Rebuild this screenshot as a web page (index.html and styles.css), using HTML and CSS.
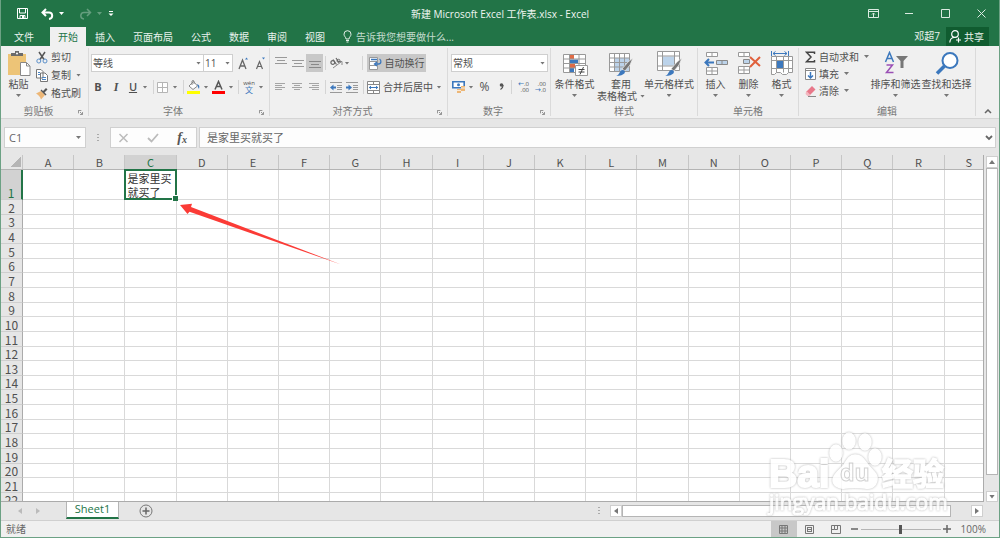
FILE: index.html
```html
<!DOCTYPE html>
<html lang="zh-CN">
<head>
<meta charset="utf-8">
<title>新建 Microsoft Excel 工作表.xlsx - Excel</title>
<link rel="stylesheet" href="styles.css">
</head>
<body>
<div class="window">
<header class="titlebar">
  <div class="quick">
    <button aria-label="保存"><svg width="11" height="11" viewBox="0 0 11 11"><path d="M.5.5h10v10H.5z" fill="none" stroke="#fff"/><path d="M2.500 1v4h6V1M3 10.500V7.500h5v3" fill="none" stroke="#fff"/><path d="M5 8h2v3H5z" fill="#fff"/></svg></button>
    <button aria-label="撤消"><svg width="13" height="12" viewBox="0 0 13 12"><path d="M2 4.500h6c4 0 4.500 6 0 6.500M5 1 1.500 4.500 5 8" fill="none" stroke="#fff" stroke-width="2"/></svg></button>
    <i class="caret light"></i>
    <button class="faded" aria-label="恢复"><svg width="13" height="12" viewBox="0 0 13 12"><path d="M11 4.500H5c-4 0-4.500 6 0 6.500M8 1l3.500 3.500L8 8" fill="none" stroke="#fff" stroke-width="1.500"/></svg></button>
    <i class="caret light faded"></i>
    <button aria-label="自定义快速访问工具栏"><svg width="6" height="6" viewBox="0 0 6 6"><path d="M1 .5h4" stroke="#fff"/><path d="M.5 2.500h5L3 5z" fill="#fff"/></svg></button>
  </div>
  <h1>新建 Microsoft Excel 工作表.xlsx - Excel</h1>
  <div class="winbtns">
    <button aria-label="功能区显示选项"><svg width="11" height="9" viewBox="0 0 11 9"><path d="M.5.5h10v8H.5zM1 2.500h9M5.500 8V4M4 5.500 5.500 4 7 5.500" fill="none" stroke="#dcebe2"/></svg></button>
    <button aria-label="最小化"><svg width="9" height="9" viewBox="0 0 9 9"><path d="M0 4.500h8" stroke="#dcebe2"/></svg></button>
    <button aria-label="最大化"><svg width="9" height="9" viewBox="0 0 9 9"><path d="M.5.5h8v8h-8z" fill="none" stroke="#dcebe2"/></svg></button>
    <button aria-label="关闭"><svg width="9" height="9" viewBox="0 0 9 9"><path d="m.5.5 8 8m0-8-8 8" stroke="#dcebe2"/></svg></button>
  </div>
</header>
<nav class="tabs">
  <button class="file">文件</button><button class="active">开始</button><button>插入</button><button>页面布局</button><button>公式</button><button>数据</button><button>审阅</button><button>视图</button>
  <button class="tell"><svg width="9" height="13" viewBox="0 0 9 13"><path d="M3 9C3 7 1 6.500 1 4.200a3.500 3.500 0 0 1 7 0C8 6.500 6 7 6 9zM3 10.500h3M3.500 12h2" fill="none" stroke="#e5f0e9"/></svg>告诉我您想要做什么...</button>
  <span class="user">邓超7</span>
  <button class="share"><svg width="13" height="13" viewBox="0 0 13 13"><circle cx="6" cy="4" r="3.300" fill="none" stroke="#fff" stroke-width="1.200"/><path d="M.8 12.500C1 9 3 7.500 5.500 7.500M7 10h5M9.500 7.500v5" fill="none" stroke="#fff" stroke-width="1.200"/></svg>共享</button>
</nav>
<div class="ribbon">
  <section class="group g-clip">
    <div class="body">
      <button class="big"><svg width="24" height="26" viewBox="0 0 24 26"><path d="M1 3h18v21H1z" fill="#edc477"/><path d="M4 5V2h4V0h4v2h4v3z" fill="#6b6b6b"/><circle cx="10" cy="2.500" r="1" fill="#fff"/><path d="M13.500 11.500h6l3.500 3.500v9.500h-9.500z" fill="#fff" stroke="#888"/><path d="M19.500 11.500V15H23" fill="none" stroke="#888"/></svg><span>粘贴</span><i class="caret"></i></button>
      <div class="stack">
        <button><svg width="12" height="13" viewBox="0 0 12 13"><path d="m3 1 5 7.500M9 1 4 8.500" stroke="#555" stroke-width="1.500"/><circle cx="2.800" cy="10" r="2" fill="none" stroke="#5b8fc9"/><circle cx="9" cy="10" r="2" fill="none" stroke="#5b8fc9"/></svg>剪切</button>
        <button><svg width="12" height="13" viewBox="0 0 12 13"><path d="M.5.500h4.500l2 2V9H.5zM4.500 4h4.500L11.500 6.500v6h-7z" fill="#fff" stroke="#777"/><path d="M2 3.500h2M2 5.500h2M6 8.500h4M6 10.500h4" stroke="#4a84c4"/></svg>复制<i class="caret"></i></button>
        <button><svg width="12" height="13" viewBox="0 0 12 13"><path d="M0 6.500 5 4l4 4-4 4.500C4 9 2 8 0 6.500z" fill="#edb777"/><path d="m4.500 3.500 5 5 1-1-2-2 3-3-1.500-1.500-3 3-1.500-1.500z" fill="#555"/></svg>格式刷</button>
      </div>
    </div>
    <footer><span>剪贴板</span><svg class="launch" viewBox="0 0 6 6"><path d="M.5 4V.5H4M2.500 2.500l2 2M5.500 2.500v3h-3" fill="none" stroke="#777"/></svg></footer>
  </section>
  <section class="group g-font">
    <div class="body rows">
      <div class="tools font1">
        <label class="combo"><select aria-label="字体"><option>等线</option></select><i class="caret"></i></label>
        <label class="combo size"><select aria-label="字号"><option>11</option></select><i class="caret"></i></label>
        <button aria-label="增大字号"><svg width="11" height="13" viewBox="0 0 11 13"><path d="m1 12 3.500-9L8 12M2.200 9h4.600" fill="none" stroke="#666" stroke-width="1.300"/><path d="m7 2.500 1.500-2 1.500 2z" fill="#3c78bd"/></svg></button>
        <button aria-label="减小字号"><svg width="11" height="13" viewBox="0 0 11 13"><path d="m1.500 12 3-7.500 3 7.500M2.500 9.500h4" fill="none" stroke="#666" stroke-width="1.200"/><path d="M7 .5h3l-1.500 2z" fill="#3c78bd"/></svg></button>
      </div>
      <div class="tools font2">
        <button class="bold">B</button><button class="italic">I</button><button class="under">U</button><i class="caret"></i><i class="sep"></i>
        <button aria-label="边框"><svg width="11" height="11" viewBox="0 0 11 11"><path d="M.5.5h10v10H.5zM5.500 0v11M0 5.500h11" fill="#fff" stroke="#b5b5b5"/></svg></button><i class="caret"></i><i class="sep"></i>
        <button aria-label="填充颜色"><svg width="13" height="14" viewBox="0 0 13 14"><path d="M2 6 6.500 1.500 10.500 6 6 9.500z" fill="#fff" stroke="#888"/><path d="M5 5V1q1-1 2 0v3" fill="none" stroke="#888"/><path d="M10 4c3 1 2.500 3 2 5-1-1-1-3-2-5z" fill="#3c78bd"/><path d="M0 11h13v3H0z" fill="#ffff00"/></svg></button><i class="caret"></i>
        <button aria-label="字体颜色"><svg width="13" height="14" viewBox="0 0 13 14"><path d="m3 9.500 3.500-8 3.500 8M4 6.500h5" fill="none" stroke="#555" stroke-width="1.500"/><path d="M0 11h13v3H0z" fill="#f00"/></svg></button><i class="caret"></i><i class="sep"></i>
        <button class="phon"><span>wén</span><b>文</b></button><i class="caret"></i>
      </div>
    </div>
    <footer><span>字体</span><svg class="launch" viewBox="0 0 6 6"><path d="M.5 4V.5H4M2.500 2.500l2 2M5.500 2.500v3h-3" fill="none" stroke="#777"/></svg></footer>
  </section>
  <section class="group g-align">
    <div class="body rows">
      <div class="tools align1">
        <button aria-label="顶端对齐"><svg width="12" height="12" viewBox="0 0 12 12"><path d="M0 .5h12M2 3.500h8M0 6.500h12" stroke="#999"/></svg></button>
        <button aria-label="垂直居中"><svg width="12" height="12" viewBox="0 0 12 12"><path d="M0 3.500h12M2 6.500h8M0 9.500h12" stroke="#999"/></svg></button>
        <button class="on" aria-label="底端对齐"><svg width="12" height="12" viewBox="0 0 12 12"><path d="M0 4.500h12M2 7.500h8M0 10.500h12" stroke="#888"/></svg></button>
        <i class="sep"></i>
        <button aria-label="方向"><svg width="13" height="12" viewBox="0 0 13 12"><path d="M3 11 11 5M8.500 4.500H12V8" fill="none" stroke="#888"/><circle cx="2.800" cy="5.500" r="1.900" fill="none" stroke="#666" stroke-width="1.200"/><path d="m3 2.500 3.500 5M6 1l3 4.500" stroke="#666" stroke-width="1.200"/><circle cx="8.500" cy="3.800" r="1.500" fill="none" stroke="#666"/></svg></button><i class="caret"></i><i class="sep last"></i>
        <button class="on wide"><svg width="13" height="13" viewBox="0 0 13 13"><path d="M.5.500h8v12h-8zM.5 4.500h8M.5 8.500h8" fill="#fff" stroke="#999"/><path d="M2 2.500h6M10.500 2c2 1 2 5-1 5H6M8 5 5.500 7 8 9" fill="none" stroke="#3c78bd" stroke-width="1.300"/></svg>自动换行</button>
      </div>
      <div class="tools align2">
        <button aria-label="左对齐"><svg width="10" height="10" viewBox="0 0 10 10"><path d="M0 1.500h10M0 3.500h7M0 5.500h10M0 7.500h7" stroke="#a5a5a5"/></svg></button>
        <button aria-label="居中"><svg width="10" height="10" viewBox="0 0 10 10"><path d="M0 1.500h10M2 3.500h6M0 5.500h10M2 7.500h6" stroke="#a5a5a5"/></svg></button>
        <button aria-label="右对齐"><svg width="10" height="10" viewBox="0 0 10 10"><path d="M0 1.500h10M3 3.500h7M0 5.500h10M3 7.500h7" stroke="#a5a5a5"/></svg></button>
        <i class="sep"></i>
        <button aria-label="减少缩进量"><svg width="12" height="11" viewBox="0 0 12 11"><path d="M0 .5h12M7 3.500h5M7 5.500h5M7 7.500h5M0 10.500h12" stroke="#999"/><path d="M6 5.500H2" stroke="#3c78bd" stroke-width="2"/><path d="M3.500 2.500v6L0 5.500z" fill="#3c78bd"/></svg></button>
        <button aria-label="增加缩进量"><svg width="12" height="11" viewBox="0 0 12 11"><path d="M0 .5h12M7 3.500h5M7 5.500h5M7 7.500h5M0 10.500h12" stroke="#999"/><path d="M0 5.500h4" stroke="#3c78bd" stroke-width="2"/><path d="M2.500 2.500v6l3.500-3z" fill="#3c78bd"/></svg></button>
        <i class="sep"></i>
        <button class="wide"><svg width="13" height="13" viewBox="0 0 13 13"><path d="M.5.500h12v12H.5zM.5 3.500h12M.5 9.500h12M6.500.5v3M6.500 9.500v3" fill="#fff" stroke="#888"/><path d="M2 6.500h9M4 5 2.300 6.500 4 8M9 5l1.700 1.500L9 8" fill="none" stroke="#3c78bd"/></svg>合并后居中</button><i class="caret"></i>
      </div>
    </div>
    <footer><span>对齐方式</span><svg class="launch" viewBox="0 0 6 6"><path d="M.5 4V.5H4M2.500 2.500l2 2M5.500 2.500v3h-3" fill="none" stroke="#777"/></svg></footer>
  </section>
  <section class="group g-num">
    <div class="body rows">
      <div class="tools num1"><label class="combo"><select aria-label="数字格式"><option>常规</option></select><i class="caret"></i></label></div>
      <div class="tools num2">
        <button aria-label="会计数字格式"><svg width="13" height="13" viewBox="0 0 13 13"><path d="M.8.800h11.400v6H.8z" fill="#fff" stroke="#3c78bd" stroke-width="1.600"/><circle cx="6.500" cy="3.800" r="1.500" fill="#3c78bd"/><path d="M5 8h4v4H5zM9 5h4v5H9z" fill="#edb777"/><path d="M5 9.500h4M9 7h4" stroke="#fff" stroke-width=".7"/></svg></button><i class="caret"></i>
        <button class="pct">%</button><button aria-label="千位分隔样式"><svg width="5" height="8" viewBox="0 0 5 8"><circle cx="2.500" cy="2" r="1.800" fill="#555"/><path d="M4 2c.3 2-1 3.500-2.500 4.500" fill="none" stroke="#555" stroke-width="1.200"/></svg></button><i class="sep"></i>
        <button class="dec"><span><b>←</b>.0</span><span>.00</span></button>
        <button class="dec"><span>.00</span><span><b>→</b>.0</span></button>
      </div>
    </div>
    <footer><span>数字</span><svg class="launch" viewBox="0 0 6 6"><path d="M.5 4V.5H4M2.500 2.500l2 2M5.500 2.500v3h-3" fill="none" stroke="#777"/></svg></footer>
  </section>
  <section class="group g-style">
    <div class="body">
      <button class="big"><svg width="26" height="26" viewBox="0 0 26 26"><path d="M1.500 3.500h22v18h-22z" fill="#fff"/><path d="M8 3h4v5H8zM8 13h5v4H8z" fill="#e06b45"/><path d="M8 8.500h8v4H8zM8 17h4v4H8z" fill="#3c78bd"/><path d="M1.500 3.500h22v18h-22zM1.500 8h22M1.500 12.500h22M1.500 17h22M7.500 3.500v18M17 3.500v18" fill="none" stroke="#999"/><path d="M13.500 14.500h12v10h-12z" fill="#fff" stroke="#999"/><path d="M16.500 18.500h6M16.500 21h6M21.500 16l-3.500 7.500" stroke="#444"/></svg><span>条件格式</span><i class="caret"></i></button>
      <button class="big"><svg width="26" height="26" viewBox="0 0 26 26"><path d="M1.500 2.500h20v18h-20z" fill="#fff"/><path d="M6.500 7h15v13.500h-15z" fill="#bcd3ea"/><path d="M1.500 2.500h20v18h-20zM1.500 7h20M1.500 11.500h20M1.500 16h20M6.500 2.500v18M11.500 2.500v18M16.500 2.500v18" fill="none" stroke="#999"/><path d="m14 18 6-7 5-4-3 7-5 6z" fill="#777" stroke="#f0f0f0" stroke-width=".7"/><path d="M8 25c4-1 3-6 7-6 4 1 2 6-7 6z" fill="#3c78bd"/></svg><span>套用</span><span class="with">表格格式<i class="caret"></i></span></button>
      <button class="big"><svg width="26" height="26" viewBox="0 0 26 26"><path d="M1.500.5h22v19h-22z" fill="#fff"/><path d="M6.500 5.500h12v9h-12z" fill="#bcd3ea"/><path d="M1.500.5h22v19h-22zM1.500 5h22M1.500 15h22M6.500.5v19M18.500.5v19" fill="none" stroke="#999"/><path d="m15 18 6-7 5-4-3 7-5 6z" fill="#777" stroke="#f0f0f0" stroke-width=".7"/><path d="M9 25c4-1 3-6 7-6 4 1 2 6-7 6z" fill="#3c78bd"/></svg><span>单元格样式</span><i class="caret"></i></button>
    </div>
    <footer class="plain"><span>样式</span></footer>
  </section>
  <section class="group g-cell">
    <div class="body">
      <button class="big"><svg width="24" height="26" viewBox="0 0 24 26"><path d="M2.500 1.500h11v4h-11zM8 1.500v4M2.500 16.500h11v7h-11zM8 16.500v7M2.500 20h11" fill="#fff" stroke="#999"/><path d="M12.500 9.500h11v4h-11zM18 9.500v4" fill="#bcd3ea" stroke="#888"/><path d="M10 11.500H2M5 8l-3.500 3.500L5 15" fill="none" stroke="#3c78bd" stroke-width="2"/></svg><span>插入</span><i class="caret"></i></button>
      <button class="big"><svg width="24" height="26" viewBox="0 0 24 26"><path d="M1.500 1.500h11v4h-11zM7 1.500v4M1.500 15.500h11v7h-11zM7 15.500v7M1.500 19h11" fill="#fff" stroke="#999"/><path d="M6.500 8.500h6v4h-6z" fill="#bcd3ea" stroke="#888"/><path d="m13 6 10 9M23 6l-10 10" stroke="#e0603c" stroke-width="2"/></svg><span>删除</span><i class="caret"></i></button>
      <button class="big"><svg width="24" height="26" viewBox="0 0 24 26"><path d="M1.500 5.500h21v16h-4l-2 2h-4l-2-2h-4l-2 2h-3z" fill="#fff"/><path d="M7 10h6v7H7z" fill="#3c78bd"/><path d="M1.500 5.500h21v16h-4l-2 2h-4l-2-2h-4l-2 2h-3zM1.500 9.500h21M1.500 17.500h21M6.500 5.500v16M13.500 5.500v16M18.500 5.500v16" fill="none" stroke="#999"/><path d="M1.500 0v5M18.500 0v5M3 2.500h14M5.500.5l-2.500 2 2.500 2M14.500.5l2.500 2-2.500 2" fill="none" stroke="#3c78bd"/></svg><span>格式</span><i class="caret"></i></button>
    </div>
    <footer class="plain"><span>单元格</span></footer>
  </section>
  <section class="group g-edit">
    <div class="body">
      <div class="stack">
        <button><svg width="11" height="12" viewBox="0 0 11 12"><path d="M9.500 3V1.200H1.500L6 6l-4.500 4.800h8V9" fill="none" stroke="#444" stroke-width="1.500"/></svg>自动求和<i class="caret far"></i></button>
        <button><svg width="11" height="12" viewBox="0 0 11 12"><path d="M.5.500h10v11H.5zM.5 2.500h10" fill="#fff" stroke="#888"/><path d="M5.500 4v6M3 7.500 5.500 10 8 7.500" fill="none" stroke="#3c78bd" stroke-width="1.500"/></svg>填充<i class="caret"></i></button>
        <button><svg width="11" height="12" viewBox="0 0 11 12"><path d="m1 7 6-6 3.500 3.500-6 6z" fill="#e8788a"/><path d="m1 7-.5 2L2.500 11h2l1-1L2 6.500z" fill="#f3b6bf"/><path d="M3 11.500h8" stroke="#888"/></svg>清除<i class="caret"></i></button>
      </div>
      <button class="big"><svg width="24" height="26" viewBox="0 0 24 26"><path d="m1.500 11 4-9.500 4 9.500M3 7.500h5" fill="none" stroke="#3c78bd" stroke-width="1.500"/><path d="M2.500 14h6l-6 7.500h7" fill="none" stroke="#9a4fb5" stroke-width="1.500"/><path d="M12 5h12l-4.500 5v7h-3v-7z" fill="#777"/></svg><span>排序和筛选</span><i class="caret"></i></button>
      <button class="big"><svg width="24" height="26" viewBox="0 0 24 26"><circle cx="15" cy="9.500" r="7.500" fill="#fff" stroke="#3c78bd" stroke-width="2"/><path d="m9.500 15-7.500 7.500" stroke="#3c78bd" stroke-width="3.500"/></svg><span>查找和选择</span><i class="caret"></i></button>
    </div>
    <footer class="plain"><span>编辑</span></footer>
  </section>
  <button class="collapse" aria-label="折叠功能区"><svg width="8" height="5" viewBox="0 0 8 5"><path d="m1 4 3-3 3 3" fill="none" stroke="#666" stroke-width="1.500"/></svg></button>
</div>
<div class="formula">
  <label class="namebox"><input value="C1" aria-label="名称框"><i class="caret"></i></label>
  <span class="dots"></span>
  <div class="fxbox">
    <button aria-label="取消"><svg width="11" height="10" viewBox="0 0 11 10"><path d="m1.500 1 8 8m0-8-8 8" stroke="#bbb" stroke-width="1.500"/></svg></button>
    <button aria-label="输入"><svg width="12" height="10" viewBox="0 0 12 10"><path d="m1 5 3.500 3.500L11 1" fill="none" stroke="#bbb" stroke-width="1.800"/></svg></button>
    <button class="fx">f<small>x</small></button>
  </div>
  <label class="fbox"><input value="是家里买就买了" aria-label="编辑栏"><svg width="8" height="6" viewBox="0 0 8 6"><path d="m1 1 3 3 3-3" fill="none" stroke="#666" stroke-width="1.800"/></svg></label>
</div>
<main class="work">
  <table class="sheet" id="sheet"></table>
  <div class="vscroll"><button aria-label="向上滚动"><i class="tri up"></i></button><div class="thumb"></div><button aria-label="向下滚动"><i class="tri down"></i></button></div>
  <svg class="arrow" width="164" height="64" viewBox="0 0 164 64"><path d="m1 3 12-1.300-1 3.300L162 62.500 10.500 9.800 8.500 12z" fill="#fb3b36"/></svg>
</main>
<div class="sheetbar">
  <div class="nav"><i class="tri left"></i><i class="tri right"></i></div>
  <button class="sheettab">Sheet1</button>
  <button class="add" aria-label="新工作表"><svg width="14" height="14" viewBox="0 0 14 14"><circle cx="7" cy="7" r="6" fill="none" stroke="#777"/><path d="M7 3.500v7M3.500 7h7" stroke="#666" stroke-width="1.500"/></svg></button>
  <span class="dots"></span>
  <div class="hscroll"><button aria-label="向左滚动"><i class="tri left"></i></button><div class="thumb"></div><button aria-label="向右滚动"><i class="tri right"></i></button></div>
</div>
<footer class="status">
  <span class="ready">就绪</span>
  <button class="on" aria-label="普通"><svg width="9" height="9" viewBox="0 0 9 9"><path d="M.5.5h8v8h-8zM.5 3h8M.5 6h8M3 .5v8M6 .5v8" fill="none" stroke="#777"/></svg></button>
  <button aria-label="页面布局"><svg width="9" height="9" viewBox="0 0 9 9"><path d="M.5.5h8v8h-8zM2.500 2v5M6.500 2v5M3 2.500h3M3 4.500h3M3 6.500h3" fill="none" stroke="#777"/></svg></button>
  <button aria-label="分页预览"><svg width="10" height="9" viewBox="0 0 10 9"><path d="M.5.5h9v8h-9zM3.500.5v4h-3M6.500.5v4h-3" fill="none" stroke="#777"/></svg></button>
  <div class="zoom"><button aria-label="缩小"><svg width="7" height="8" viewBox="0 0 7 8"><path d="M0 4h7" stroke="#666" stroke-width="1.500"/></svg></button><input type="range" min="0" max="200" value="100" aria-label="缩放"><button aria-label="放大"><svg width="8" height="8" viewBox="0 0 8 8"><path d="M0 4h8M4 0v8" stroke="#666" stroke-width="1.500"/></svg></button></div>
  <span class="pctval">100%</span>
</footer>
<svg class="mark" width="184" height="92" viewBox="0 0 184 92" aria-hidden="true">
  <g fill="#fff" stroke="#fff" stroke-width="1.500">
    <text class="brand" x="3" y="57">Bai</text>
    <ellipse cx="70" cy="23" rx="6" ry="8"/><ellipse cx="83" cy="11" rx="6" ry="8"/><ellipse cx="99" cy="12" rx="6" ry="8"/><ellipse cx="109" cy="27" rx="6" ry="8"/>
    <path d="M89 25c7 0 9 5 13 10 5 6 10 9 9 15-1 7-7 9-12 8-7-1-14-1-20 0-7 1-12-3-12-8 0-6 6-9 11-15 3-5 5-10 11-10z"/>
    <text class="du" x="74" y="51">du</text>
    <text class="brandcn" x="116" y="55">经验</text>
    <text class="site" x="3" y="80">jingyan.baidu.com</text>
  </g>
</svg>
</div>
<script src="sheet.js"></script>
</body>
</html>
```
FILE: sheet.js
```javascript
const sheet = document.getElementById('sheet');
const letters = 'ABCDEFGHIJKLMNOPQRS'.split('');
const head = letters.map(l => `<th scope="col"${l === 'C' ? ' class="cur"' : ''}>${l}</th>`).join('');
let rows = '';
for (let r = 1; r <= 22; r++) {
  const cells = letters.map(l => r === 1 && l === 'C' ? '<td class="picked">是家里买就买了</td>' : '<td></td>').join('');
  rows += `<tr><th scope="row"${r === 1 ? ' class="cur"' : ''}>${r}</th>${cells}</tr>`;
}
sheet.innerHTML = `<thead><tr><td class="corner"></td>${head}</tr></thead><tbody>${rows}</tbody>`;
```
FILE: styles.css
```css
* { box-sizing: border-box; }
body { margin: 0; font: 10px/12px "Open Sans", "Noto Sans CJK SC", sans-serif; color: #505050; }
button { border: 0; padding: 0; background: none; font: inherit; color: inherit; display: flex; align-items: center; justify-content: center; white-space: nowrap; }
svg { display: block; flex: none; }
input, select { font: inherit; color: inherit; border: 0; padding: 0; margin: 0; background: none; appearance: none; min-width: 0; outline: 0; }
.window { position: relative; height: 100vh; display: flex; flex-direction: column; border: 1px solid #6ca184; border-top: 0; background: #e6e6e6; overflow: hidden; }
.caret { width: 5px; height: 3px; background: #777; clip-path: polygon(0 0, 100% 0, 50% 100%); flex: none; justify-self: center; align-self: center; }
.caret.light { background: #fff; }
.faded, .caret.faded { opacity: .3; }

.titlebar { flex: none; height: 27px; background: #227447; color: #f0f6f2; display: grid; grid-template-columns: 1fr auto 1fr; align-items: center; margin: 0 -1px; }
.titlebar h1 { margin: 0; font-size: 10px; font-weight: 400; }
.quick { display: grid; grid-template-columns: 11px 13px 5px 13px 5px 6px; column-gap: 10px; align-items: center; padding-left: 17px; }
.quick button:nth-child(2), .quick button:nth-child(4) { margin-left: 3px; margin-right: -3px; }
.quick .caret { justify-self: start; margin-left: -2px; }
.quick button:last-child { margin-left: -12px; }
.quick { grid-template-columns: 11px 13px 5px 13px 5px 6px; }
.winbtns { display: flex; justify-content: flex-end; padding-right: 1px; }
.winbtns button { width: 36px; height: 24px; }

.tabs { flex: none; display: flex; height: 19px; background: #227447; color: #e9f2ed; margin: 0 -1px; padding-right: 11px; }
.tabs button { padding: 0 9px; }
.tabs .file { width: 50px; padding: 0 2px 0 0; }
.tabs .active { background: #f0f0f0; color: #227447; padding: 0 8px; }
.tabs .tell { gap: 4px; color: #c5dccf; }
.tabs .user { margin: 3px 6px 0 auto; }
.tabs .share { background: #105c30; padding: 0 5px 0 3px; gap: 2px; }

.ribbon { flex: none; display: flex; height: 73px; background: #f0f0f0; border-bottom: 1px solid #d5d5d5; padding-top: 2px; }
.group { display: flex; flex-direction: column; border-right: 1px solid #dadada; margin-bottom: 2px; }
.group .body { flex: 1; display: flex; }
.group footer { flex: none; height: 14px; padding-top: 3px; display: grid; grid-template-columns: 4px 1fr 16px; align-items: center; color: #777; text-align: center; }
.group footer.plain { grid-template-columns: 4px 1fr 4px; }
.group footer span { grid-column: 2; }
.launch { width: 5px; height: 5px; margin: 3px auto 0; }
.g-clip { width: 88px; }
.g-font { width: 181px; }
.g-align { width: 178px; }
.g-num { width: 103px; }
.g-style { width: 147px; }
.g-cell { width: 101px; }
.g-edit { flex: 1; }
.big { flex: none; flex-direction: column; justify-content: flex-start; padding-top: 3px; }
.big svg { margin-bottom: 1px; }
.big .caret { margin-top: 4px; }
.big .caret { align-self: center; }
.big .with { display: flex; gap: 3px; }
.big .with .caret { margin-top: 0; }
.g-clip .big { width: 35px; }
.g-style .big { width: 46px; }
.g-style .big:first-child { width: 47px; }
.g-style .big:last-child { width: 50px; }
.g-cell .big { width: 33px; }
.g-cell .body { padding-left: 1px; }
.g-edit .big { width: 51px; }
.stack { flex: none; display: flex; flex-direction: column; }
.stack button { height: 18px; gap: 3px; justify-content: flex-start; }
.stack .caret { margin-left: 2px; }
.g-edit .stack { width: 71px; padding-left: 6px; }
.g-edit .stack button { height: 17px; }

.body.rows { flex-direction: column; gap: 4px; padding-top: 5px; }
.tools { display: grid; height: 20px; align-items: center; }
.font1 { grid-template-columns: 113px 29px 20px 14px; padding-left: 2px; }
.font2 { grid-template-columns: 18px 18px 16px 8px 8px 11px 14px 2px 19px 6px 19px 6px 8px 14px 10px; }
.align1 { grid-template-columns: 17px 17px 17px 4px 18px 4px 18px 59px; padding-left: 2px; }
.align2 { grid-template-columns: 16px 17px 17px 6px 16px 16px 7px 66px 12px; padding-left: 2px; }
.num1 { grid-template-columns: 97px; padding-left: 3px; }
.num2 { grid-template-columns: 18px 8px 19px 14px 7px 17px 17px; padding-left: 1px; }
.sep { width: 1px; height: 14px; background: #d4d4d4; justify-self: center; }
.sep.last { justify-self: end; margin-right: 4px; }
.on { background: #c8c8c8; height: 18px; }
.wide { gap: 3px; }
.combo { display: grid; height: 18px; background: #fff; border: 1px solid #cfcfcf; align-items: center; }
.combo > * { grid-area: 1 / 1; }
.combo select { padding-left: 1px; width: 100%; font-size: 10px; line-height: 14px; }
.combo .caret { justify-self: end; margin-right: 2px; }
.combo.size { border-left: 0; }
.bold { font-weight: 700; font-size: 11px; }
.italic { font: italic 700 12px "Liberation Serif", serif; }
.under { text-decoration: underline; font-weight: 600; font-size: 11px; }
.phon { flex-direction: column; font-size: 6px; line-height: 6px; }
.phon b { font-size: 8px; line-height: 8px; font-weight: 400; color: #3c78bd; }
.pct { font-size: 12px; }
.dec { flex-direction: column; align-items: flex-end; justify-self: center; font-size: 6px; line-height: 6px; }
.dec span { display: block; }
.dec b { color: #3c78bd; }
.collapse { width: 23px; align-self: flex-end; height: 14px; }

.formula { flex: none; display: flex; padding: 8px 3px 7px; height: 36px; font-size: 11px; color: #666; }
.namebox, .fxbox, .fbox { display: flex; align-items: center; background: #fdfdfd; border: 1px solid #d0d0d0; }
.namebox { width: 82px; padding: 0 4px; }
.namebox input { flex: 1; }
.dots { width: 2px; height: 8px; align-self: center; background: repeating-linear-gradient(#aaa 0 1px, transparent 1px 3px); }
.formula .dots { margin: 0 11px 0 11px; }
.fxbox { width: 87px; justify-content: space-between; padding: 0 9px 0 7px; }
.fx { font: italic 700 14px "Liberation Serif", serif; color: #555; }
.fx small { font-size: 10px; padding-top: 4px; }
.fbox { flex: 1; margin-left: 2px; padding: 0 2px 0 7px; }
.fbox input { flex: 1; }

.work { position: relative; flex: 1; min-height: 0; display: flex; }
.sheet { flex: 1; display: flex; flex-direction: column; border-right: 1px solid #ababab; border-bottom: 1px solid #ababab; font: 11px/14px "Noto Sans CJK SC", sans-serif; color: #505050; min-height: 0; }
.sheet thead { display: block; flex: none; height: 15px; }
.sheet tbody { flex: 1; min-height: 0; display: grid; grid-template-rows: 30px repeat(20, minmax(0, 11fr)) minmax(0, 6fr); background: #fff; }
.sheet tr { display: grid; grid-template-columns: 22px repeat(18, minmax(0, 4fr)) minmax(0, 3fr); grid-template-rows: minmax(0, 1fr); min-height: 0; }
.sheet thead tr { height: 100%; border-bottom: 1px solid #b4b4b4; }
.sheet th, .sheet td { padding: 0; min-height: 0; font-weight: 400; }
.sheet thead th { border-right: 1px solid #c6c6c6; line-height: 15px; }
.sheet thead th:last-child { border-right: 0; padding-left: 10px; }
.sheet .corner { background: linear-gradient(135deg, transparent 50%, #b5b5b5 50%) no-repeat 10px 2px / 10px 10px; border-right: 1px solid #c6c6c6; }
.sheet tbody th { background: #e6e6e6; border-right: 1px solid #ababab; border-bottom: 1px solid #cfcfcf; font-size: 12px; line-height: 13px; display: flex; justify-content: center; align-items: flex-end; }
.sheet tbody tr:last-child th { align-items: flex-start; border-bottom: 0; overflow: hidden; }
.sheet tbody td { border-right: 1px solid #d9d9d9; border-bottom: 1px solid #d9d9d9; }
.sheet tr td:last-child { border-right: 0; }
.sheet tr:last-child td { border-bottom: 0; }
.sheet tbody .cur, .sheet .cur { background: #d2d2d2; color: #227447; }
.sheet tbody .cur { border-right: 2px solid #227447; }
.sheet tbody .picked { position: relative; margin: -1px 0 0 -1px; border: 2px solid #227447; padding: 0 0 0 1px; color: #333; }
.picked::after { content: ""; position: absolute; right: -3px; bottom: -3px; width: 5px; height: 5px; background: #227447; border: 1px solid #fff; border-width: 1px 0 0 1px; }
.arrow { position: absolute; left: 178px; top: 47px; }
.vscroll { flex: none; width: 15px; display: flex; flex-direction: column; padding: 1px 2px 0; }
.vscroll button, .hscroll button { flex: none; width: 12px; height: 12px; background: #fff; border: 1px solid #cfcfcf; }
.thumb { background: #fff; border: 1px solid #b5b5b5; }
.vscroll .thumb { flex: 1; margin-bottom: 16px; width: 12px; }
.vscroll button:last-child { height: 11px; }
.tri { width: 6px; height: 4px; background: #777; }
.up { clip-path: polygon(50% 0, 100% 100%, 0 100%); }
.down { clip-path: polygon(0 0, 100% 0, 50% 100%); }
.left, .right { width: 4px; height: 6px; }
.left { clip-path: polygon(100% 0, 100% 100%, 0 50%); }
.right { clip-path: polygon(0 0, 100% 50%, 0 100%); }

.sheetbar { flex: none; height: 18px; display: flex; align-items: center; }
.nav { width: 65px; display: flex; gap: 14px; padding-left: 17px; }
.nav .tri { background: #bbb; }
.sheettab { width: 53px; height: 17px; align-self: flex-start; background: #fff; border: 1px solid #b5b5b5; border-width: 0 1px 2px; border-bottom-color: #227447; color: #227447; font-size: 11px; padding-bottom: 1px; }
.add { margin-left: 20px; }
.sheetbar .dots { margin: 0 10px 0 auto; }
.hscroll { width: 373px; display: flex; margin-right: 16px; }
.hscroll .thumb { flex: 1; height: 12px; margin-right: 20px; }

.status { flex: none; height: 17px; background: #f0f0f0; border-top: 1px solid #d0d0d0; display: flex; align-items: center; padding-right: 13px; color: #666; }
.ready { margin: 0 auto 0 5px; }
.status > button { width: 26px; height: 100%; }
.zoom { display: flex; align-items: center; margin-right: 8px; }
.zoom button { width: 12px; }
.zoom input { width: 80px; height: 12px; background: linear-gradient(#b5b5b5, #b5b5b5) no-repeat center / 100% 1px; }
.zoom input::-webkit-slider-thumb { appearance: none; width: 3px; height: 9px; background: #555; }

.mark { position: absolute; right: 49px; bottom: 15px; opacity: .85; pointer-events: none; filter: drop-shadow(0 0 1px #aaa); }
.brand { font: 700 39px "Liberation Sans", sans-serif; stroke-width: 2px; }
.du { font: 700 23px "Open Sans", sans-serif; stroke: #ccc; stroke-width: 1px; }
.brandcn { font: 700 31px "Noto Sans CJK SC", sans-serif; }
.site { font: 21px "Open Sans", sans-serif; stroke-width: 1px; }
```
